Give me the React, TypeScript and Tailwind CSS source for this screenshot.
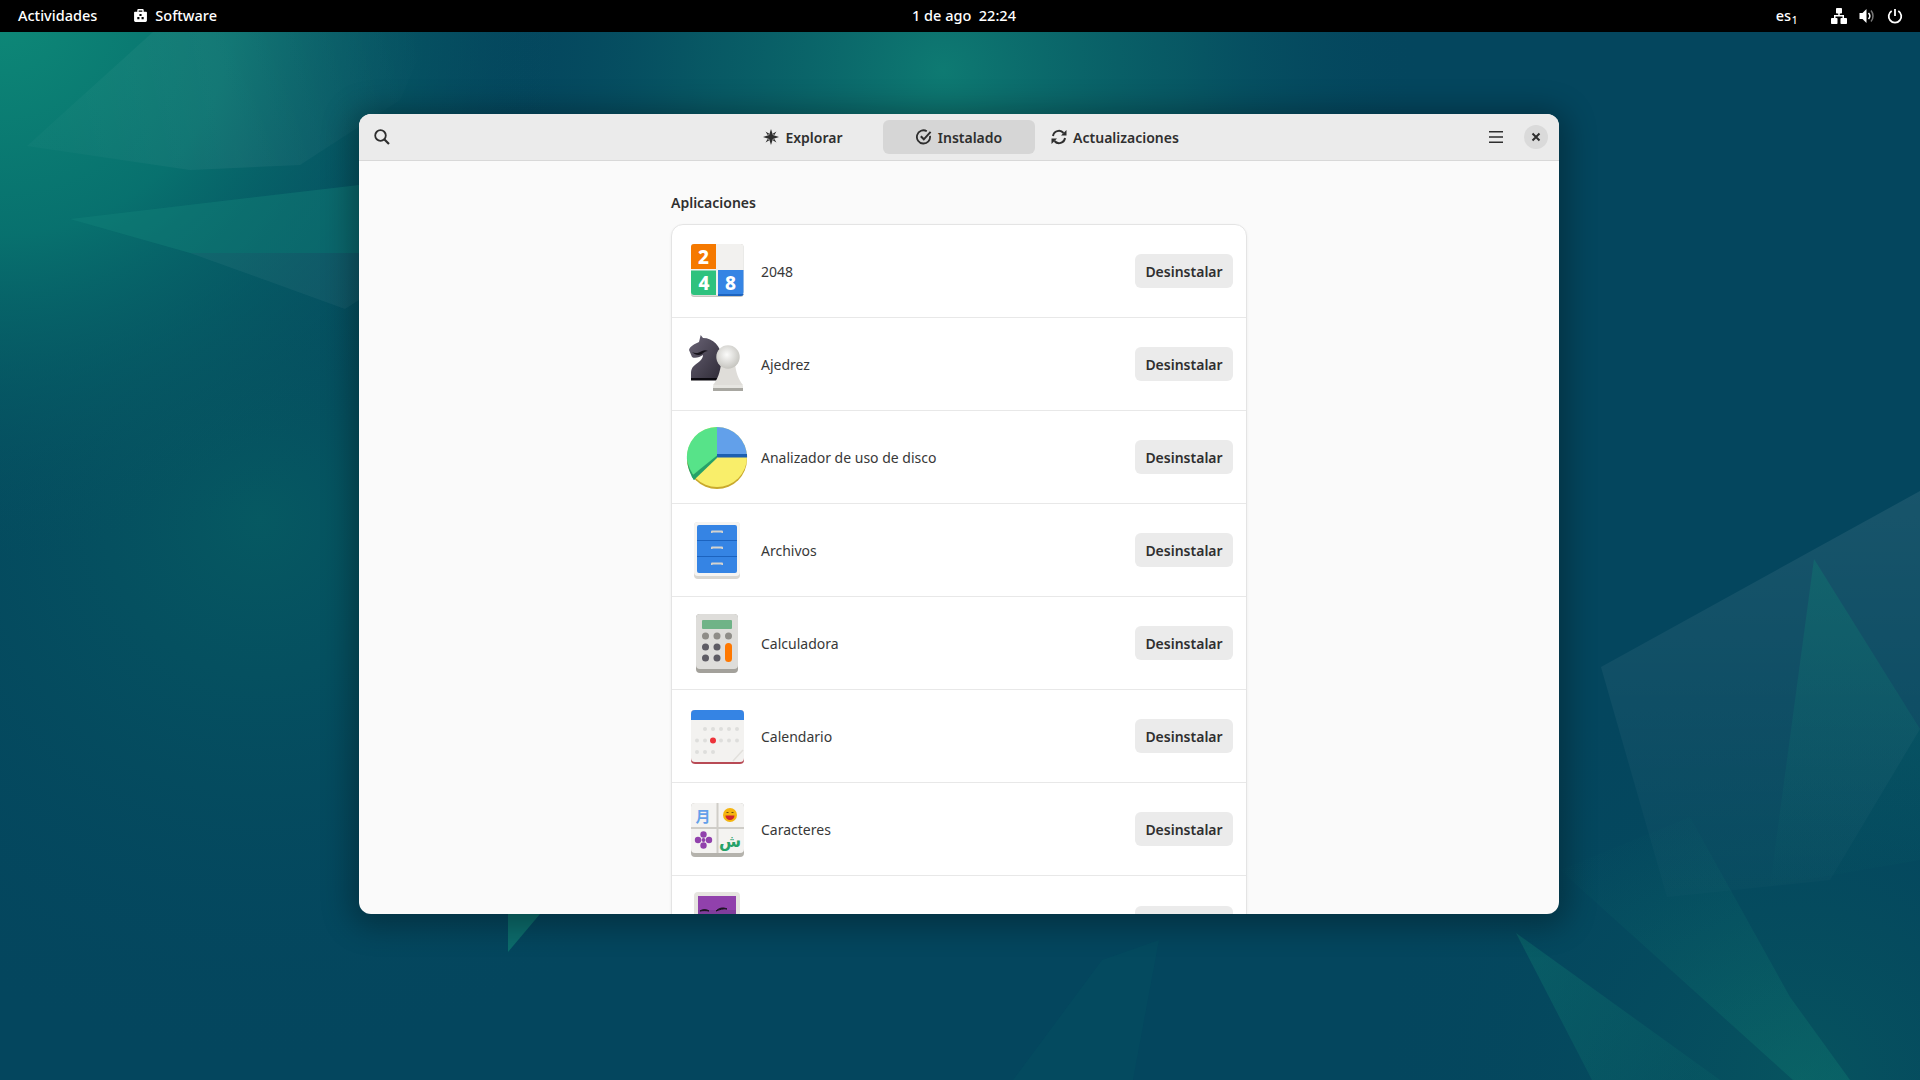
import React from "react";

const FONT = "font-['Noto_Sans','Open_Sans',sans-serif]";

function Wallpaper() {
  return (
    <svg className="absolute inset-0 w-full h-full" viewBox="0 0 1920 1080" preserveAspectRatio="none">
      <defs>
        <radialGradient id="g1" gradientUnits="userSpaceOnUse" cx="0" cy="0" r="560">
          <stop offset="0" stopColor="#0e8a78" />
          <stop offset="0.42" stopColor="#08736f" stopOpacity="0.95" />
          <stop offset="1" stopColor="#06505f" stopOpacity="0" />
        </radialGradient>
        <radialGradient id="g0" gradientUnits="userSpaceOnUse" cx="260" cy="520" r="560">
          <stop offset="0" stopColor="#065a62" stopOpacity="0.95" />
          <stop offset="1" stopColor="#04465e" stopOpacity="0" />
        </radialGradient>
        <radialGradient id="g2" gradientUnits="userSpaceOnUse" cx="943" cy="70" r="480">
          <stop offset="0" stopColor="#0e7a72" />
          <stop offset="0.5" stopColor="#0a6468" stopOpacity="0.6" />
          <stop offset="1" stopColor="#04465e" stopOpacity="0" />
        </radialGradient>
        <radialGradient id="g3" gradientUnits="userSpaceOnUse" cx="1800" cy="1080" r="440">
          <stop offset="0" stopColor="#07555f" stopOpacity="0.9" />
          <stop offset="1" stopColor="#04465e" stopOpacity="0" />
        </radialGradient>
        <linearGradient id="w1" gradientUnits="userSpaceOnUse" x1="60" y1="150" x2="430" y2="60">
          <stop offset="0" stopColor="#ffffff" stopOpacity="0.02" />
          <stop offset="0.45" stopColor="#ffffff" stopOpacity="0.05" />
          <stop offset="1" stopColor="#ffffff" stopOpacity="0" />
        </linearGradient>
        <linearGradient id="w2" gradientUnits="userSpaceOnUse" x1="1700" y1="490" x2="1700" y2="900">
          <stop offset="0" stopColor="#ffffff" stopOpacity="0.08" />
          <stop offset="1" stopColor="#ffffff" stopOpacity="0.012" />
        </linearGradient>
        <linearGradient id="t1" gradientUnits="userSpaceOnUse" x1="1814" y1="559" x2="1790" y2="880">
          <stop offset="0" stopColor="#0f7a70" stopOpacity="0.42" />
          <stop offset="1" stopColor="#0f7a70" stopOpacity="0.02" />
        </linearGradient>
        <linearGradient id="t2" gradientUnits="userSpaceOnUse" x1="1700" y1="800" x2="1840" y2="1080">
          <stop offset="0" stopColor="#0f7a70" stopOpacity="0.02" />
          <stop offset="1" stopColor="#0f7a70" stopOpacity="0.4" />
        </linearGradient>
        <linearGradient id="t3" gradientUnits="userSpaceOnUse" x1="1510" y1="940" x2="1700" y2="1060">
          <stop offset="0" stopColor="#0f7a70" stopOpacity="0.42" />
          <stop offset="1" stopColor="#0f7a70" stopOpacity="0.14" />
        </linearGradient>
      </defs>
      <rect width="1920" height="1080" fill="#04465e" />
      <rect width="1920" height="1080" fill="url(#g0)" />
      <rect width="1920" height="1080" fill="url(#g1)" />
      <rect width="1920" height="1080" fill="url(#g2)" />
      <rect width="1920" height="1080" fill="url(#g3)" />
      <polygon points="27,146 153,32 430,32 400,100 300,165 190,170" fill="url(#w1)" />
      <polygon points="70,219 359,185 359,253 190,253" fill="#12847a" fillOpacity="0.42" />
      <polygon points="190,253 359,253 359,300 345,309" fill="#ffffff" fillOpacity="0.045" />
      <polygon points="1601,667 1920,491 1920,729 1830,880 1667,897" fill="url(#w2)" />
      <polygon points="1814,559 1920,729 1920,860 1770,886" fill="url(#t1)" />
      <polygon points="1560,870 1690,817 1790,997 1850,1080 1793,1080" fill="url(#t2)" />
      <polygon points="1516,933 1592,1080 1720,1080" fill="url(#t3)" />
      <polygon points="508,914 540,914 508,952" fill="#0f7a70" fillOpacity="0.72" />
      <polygon points="1013,1080 1102,960 1159,940 1133,1080" fill="#0f7a70" fillOpacity="0.08" />
    </svg>
  );
}

function Bag() {
  return (
    <svg width="15" height="15" viewBox="0 0 14 14">
      <path fillRule="evenodd" fill="#fff" d="M5 1h4a1 1 0 0 1 1 1v1.500h2.200c.5 0 .8.400.8.800v7.400c0 .7-.6 1.300-1.300 1.300H2.300c-.7 0-1.300-.6-1.300-1.300V4.300c0-.4.3-.8.8-.8H4V2a1 1 0 0 1 1-1Zm.3 1.300v1.200h3.400V2.300ZM6 5.500v2h2v-2Zm-2 3v2h2v-2Zm4 0v2h2v-2Z" />
    </svg>
  );
}

function TopBar() {
  return (
    <div className={`relative flex items-center h-8 pb-[1px] bg-black text-white text-[14.5px] font-medium ${FONT}`}>
      <div className="flex items-center flex-1">
        <span className="ml-[18px]">Actividades</span>
        <span className="ml-[36px] flex items-center gap-[7px]">
          <Bag />
          Software
        </span>
      </div>
      <span className="absolute left-[912px]">1 de ago&nbsp;&nbsp;22:24</span>
      <div className="flex items-center">
        <span className="relative mr-[40px]">
          es<span className="absolute left-[16px] top-[8px] text-[10px]">1</span>
        </span>
        <svg width="16" height="16" viewBox="0 0 16 16" className="mr-[12px]" fill="#fff">
          <rect x="5" y="0" width="6" height="5.500" rx="0.800" />
          <rect x="7.250" y="5" width="1.500" height="3" />
          <rect x="3" y="7" width="10" height="1.500" />
          <rect x="3" y="7" width="1.500" height="4" />
          <rect x="11.500" y="7" width="1.500" height="4" />
          <rect x="0" y="10" width="6.500" height="6" rx="0.800" />
          <rect x="9.500" y="10" width="6.500" height="6" rx="0.800" />
        </svg>
        <svg width="16" height="16" viewBox="0 0 16 16" className="mr-[12px]">
          <path fill="#fff" d="M0.500 5h3L7.500 1v14l-4-4h-3Z" />
          <path fill="none" stroke="#fff" strokeWidth="1.500" d="M9.500 5a4.500 4.500 0 0 1 0 6" />
          <path fill="none" stroke="#777" strokeWidth="1.500" d="M12 2.500a8.500 8.500 0 0 1 0 11" />
        </svg>
        <svg width="16" height="16" viewBox="0 0 16 16" fill="none" stroke="#fff" strokeWidth="1.800" className="mr-[17px]">
          <path d="M8 1v7" />
          <path d="M4.700 2.900a6.300 6.300 0 1 0 6.600 0" />
        </svg>
      </div>
    </div>
  );
}

const ic = "#2e2e2e";

function TabButton({ label, icon, active }: { label: string; icon: React.ReactNode; active?: boolean }) {
  return (
    <div className={`w-[152px] h-[34px] rounded-[6px] flex items-center justify-center gap-[6px] text-[14px] font-semibold text-[#2f2f2f] ${active ? "bg-[#d6d6d6]" : ""}`}>
      {icon}
      <span>{label}</span>
    </div>
  );
}

function Header() {
  return (
    <div className="relative h-[47px] shrink-0 flex items-center justify-center gap-1 bg-[#ebebeb] border-b border-[#d8d8d8]">
      <svg width="16" height="16" viewBox="0 0 16 16" fill="none" stroke={ic} strokeWidth="1.800" className="absolute left-[15px] top-[15px]">
        <circle cx="6.500" cy="6.500" r="5.300" />
        <path d="M10.500 10.500 15 15" strokeWidth="2.200" />
      </svg>
      <TabButton
        label="Explorar"
        icon={
          <svg width="16" height="16" viewBox="0 0 16 16" fill={ic}>
            <path d="M8 0 9.900 6.100 16 8 9.900 9.900 8 16 6.100 9.900 0 8 6.100 6.100Z" />
            <path d="m2.500 2.500 3.800 2.300-1.500 1.500Zm11 0-2.300 3.800-1.500-1.500Zm-11 11 2.300-3.800 1.500 1.500Zm11 0-3.800-2.300 1.500-1.500Z" />
          </svg>
        }
      />
      <TabButton
        label="Instalado"
        active
        icon={
          <svg width="16" height="16" viewBox="0 0 16 16" fill="none" stroke={ic} strokeWidth="1.800">
            <path d="M14 6.800A6.600 6.600 0 1 1 10.800 2.200" />
            <path d="m4.800 7.300 3 3 6.800-7.500" strokeWidth="2" />
          </svg>
        }
      />
      <TabButton
        label="Actualizaciones"
        icon={
          <svg width="16" height="16" viewBox="0 0 16 16" fill="none" stroke={ic} strokeWidth="2">
            <path d="M2 7a6 6 0 0 1 10.500-3" />
            <path d="M14 9a6 6 0 0 1-10.500 3" />
            <path d="M15.500 1v5.500H10Z" fill={ic} stroke="none" />
            <path d="M.5 15V9.500H6Z" fill={ic} stroke="none" />
          </svg>
        }
      />
      <svg width="14" height="12" viewBox="0 0 14 12" fill={ic} className="absolute left-[1130px] top-[17px]">
        <path d="M0 0h14v1.500H0ZM0 5.200h14v1.500H0ZM0 10.500h14V12H0Z" />
      </svg>
      <div className="absolute left-[1165px] top-[11px] w-6 h-6 rounded-full bg-[#dadada] flex items-center justify-center">
        <svg width="10" height="10" viewBox="0 0 10 10" stroke={ic} strokeWidth="2" fill="none">
          <path d="m1.500 1.500 7 7m0-7-7 7" />
        </svg>
      </div>
    </div>
  );
}

const Icon2048 = (
  <svg width="64" height="64" viewBox="0 0 64 64">
    <rect x="6" y="5" width="52.500" height="53" rx="3" fill="#c8c6c1" />
    <rect x="6" y="5" width="52.500" height="51.500" rx="3" fill="#f2f1ef" />
    <path d="M6 8a3 3 0 0 1 3-3h22v25H6Z" fill="#f57900" />
    <path d="M6 31.500h25v24.500H9a3 3 0 0 1-3-3Z" fill="#2ec27e" />
    <path d="M33 31h25.500v22a3 3 0 0 1-3 3H33Z" fill="#3584e4" />
    <path d="M33 55h25.500v.5a3 3 0 0 1-3 1.500H33Z" fill="#1c63bf" />
    <g fill="#fff" fontSize="19" fontWeight="800" textAnchor="middle" fontFamily="Noto Sans, sans-serif">
      <text x="18.500" y="24.500">2</text>
      <text x="19" y="50.500">4</text>
      <text x="45.500" y="50.500">8</text>
    </g>
  </svg>
);

const IconChess = (
  <svg width="64" height="64" viewBox="0 0 64 64">
    <defs>
      <linearGradient id="kn" x1="0" y1="0" x2="1" y2="1">
        <stop offset="0" stopColor="#6a6476" />
        <stop offset="1" stopColor="#2d2935" />
      </linearGradient>
      <radialGradient id="pw" cx="0.45" cy="0.4" r="0.7">
        <stop offset="0" stopColor="#fbfbfa" />
        <stop offset="1" stopColor="#bdbcb6" />
      </radialGradient>
    </defs>
    <path d="M6 48v-7c0-6 4-8 9-12 2-2 3-4 3-6-3 2-8 4-11 2L4 18c1-4 6-6 10-8l1.700-7L18 6c10 0 18 8 19 20l1 22Z" fill="url(#kn)" />
    <path d="M7 20c3 2 7 1 10-1 2-1 4-1 6 0-2 0-4 1-6 3-3 2-7 1-10-2Z" fill="#17141c" />
    <rect x="6" y="46" width="32" height="2.500" fill="#0c0a10" />
    <path d="M36 32h14c1 8 3 15 8 21H28c5-6 7-13 8-21Z" fill="#dfddd9" />
    <circle cx="43" cy="25" r="11.700" fill="url(#pw)" />
    <rect x="28" y="53" width="30" height="4" rx="1" fill="#e6e5e1" />
    <rect x="28" y="56" width="30" height="3" fill="#a8a7a1" />
  </svg>
);

const IconDisk = (
  <svg width="64" height="64" viewBox="0 -1 64 64">
    <circle cx="32" cy="33" r="30" fill="#c9a92c" />
    <circle cx="32" cy="31" r="30" fill="#f9ee6a" />
    <path d="M32 1a30 30 0 0 1 30 30H32Z" fill="#62a0ea" />
    <path d="M32 28h30l.1 3.500H32Z" fill="#1c5fb0" />
    <path d="M2 34c1 6 3 11 6 15L32 31V1A30 30 0 0 0 2 34Z" fill="#57e389" />
    <path d="M32 29.500v2.500L9 54l-2.500-4Z" fill="#26a269" />
    <path d="M2 31c0 9 3 17 7 23l1.500-2C6 46 3 40 2 33Z" fill="#26a269" />
  </svg>
);

const IconFiles = (
  <svg width="64" height="64" viewBox="0 -3 64 64">
    <rect x="9" y="1" width="46" height="57" rx="4" fill="#d9d7d2" />
    <rect x="9" y="1" width="46" height="54" rx="4" fill="#f5f4f2" />
    <rect x="12" y="4" width="40" height="48" rx="2" fill="#3584e4" />
    <path d="M12 19.500h40M12 35.500h40" stroke="#1c63bf" strokeWidth="1" />
    <g fill="#d5d3ce">
      <path d="M26 12v-1.500a1 1 0 0 1 1-1h10a1 1 0 0 1 1 1V12h-1.500v-.5h-9v.5Z" />
      <path d="M26 28v-1.500a1 1 0 0 1 1-1h10a1 1 0 0 1 1 1V28h-1.500v-.5h-9v.5Z" />
      <path d="M26 44v-1.500a1 1 0 0 1 1-1h10a1 1 0 0 1 1 1V44h-1.500v-.5h-9v.5Z" />
    </g>
  </svg>
);

const IconCalc = (
  <svg width="64" height="64" viewBox="0 -1 64 64">
    <rect x="11" y="2" width="42" height="59" rx="4" fill="#a3a19b" />
    <rect x="11" y="2" width="42" height="55" rx="4" fill="#deddda" />
    <rect x="17" y="8" width="30" height="9" rx="1" fill="#6fb387" />
    <g fill="#8f8d88">
      <circle cx="20.500" cy="24" r="3.500" />
      <circle cx="32" cy="24" r="3.500" />
      <circle cx="43.500" cy="24" r="3.500" />
    </g>
    <g fill="#5e5c64">
      <circle cx="20.500" cy="35" r="3.500" />
      <circle cx="32" cy="35" r="3.500" />
      <circle cx="20.500" cy="46" r="3.500" />
      <circle cx="32" cy="46" r="3.500" />
    </g>
    <rect x="40" y="31" width="7" height="19" rx="3.500" fill="#ff7800" />
  </svg>
);

const IconCal = (
  <svg width="64" height="64" viewBox="0 -2 64 64">
    <rect x="6" y="4" width="53" height="54" rx="4" fill="#b84a55" />
    <rect x="6" y="4" width="53" height="52" rx="4" fill="#f3f2f0" />
    <path d="M6 14V8a4 4 0 0 1 4-4h45a4 4 0 0 1 4 4v6Z" fill="#3584e4" />
    <path d="M48 55 58 44" stroke="#e2e0dc" strokeWidth="1.500" />
    <g fill="#dededc">
      {[20, 28, 36, 44, 52].map((x) => <circle key={x} cx={x} cy="23" r="2" />)}
      {[12, 20, 36, 44, 52].map((x) => <circle key={x} cx={x} cy="34.500" r="2" />)}
      {[12, 20, 28].map((x) => <circle key={x} cx={x} cy="46" r="2" />)}
    </g>
    <circle cx="28" cy="34.500" r="3" fill="#ed333b" />
  </svg>
);

const IconChars = (
  <svg width="64" height="64" viewBox="0 0 64 64">
    <rect x="6" y="6" width="53" height="54" rx="4" fill="#b4b2ac" />
    <rect x="6" y="6" width="53" height="50" rx="4" fill="#f4f3f1" />
    <path d="M32.500 6v50M6 31h53" stroke="#cfcdc8" strokeWidth="2" />
    <text x="18" y="25" fontSize="15" fontWeight="700" fill="#62a0ea" textAnchor="middle" fontFamily="Noto Sans CJK SC, sans-serif">月</text>
    <circle cx="45" cy="18" r="7" fill="#f5b50f" />
    <path d="M40.500 18.500h9a4.500 4.500 0 0 1-9 0Z" fill="#d0242e" />
    <path d="M41.500 15.500h2m3 0h2" stroke="#6b4a10" strokeWidth="1" />
    <g fill="#9141ac">
      <circle cx="18.500" cy="37.500" r="3.200" />
      <circle cx="18.500" cy="48.500" r="3.200" />
      <circle cx="13" cy="43" r="3.200" />
      <circle cx="24" cy="43" r="3.200" />
      <circle cx="18.500" cy="43" r="2" />
    </g>
    <text x="45" y="50" fontSize="16" fontWeight="700" fill="#26a269" textAnchor="middle" fontFamily="DejaVu Sans, sans-serif">ش</text>
  </svg>
);

const IconCheese = (
  <svg width="64" height="64" viewBox="0 0 64 64">
    <rect x="9" y="1" width="46" height="60" rx="4" fill="#e6e4e0" />
    <rect x="13" y="5" width="38" height="50" fill="#813d9c" />
    <rect x="13" y="5" width="38" height="14" fill="#9141ac" />
    <path d="M15 20c3-2 6-2 9 0-3-.5-6-.5-9 0Zm16 0c3-3 7-4 11-2-4-.5-7 .5-11 2Z" fill="#1a1420" stroke="#1a1420" strokeWidth="1" />
  </svg>
);

const apps: [string, React.ReactNode][] = [
  ["2048", Icon2048],
  ["Ajedrez", IconChess],
  ["Analizador de uso de disco", IconDisk],
  ["Archivos", IconFiles],
  ["Calculadora", IconCalc],
  ["Calendario", IconCal],
  ["Caracteres", IconChars],
  ["", IconCheese],
];

function Row({ name, icon, last }: { name: string; icon: React.ReactNode; last?: boolean }) {
  return (
    <div className={`h-[93px] shrink-0 flex items-center pl-[13px] pr-[13px] ${last ? "" : "border-b border-[#e8e8e8]"}`}>
      <div className="w-16 h-16 shrink-0">{icon}</div>
      <span className="ml-3 flex-1 text-[14px] text-[#383838]">{name}</span>
      <div className="w-[98px] h-[34px] rounded-[6px] bg-[#ebebeb] flex items-center justify-center text-[14px] font-semibold text-[#2f2f2f]">
        {last ? "" : "Desinstalar"}
      </div>
    </div>
  );
}

function AppWindow() {
  return (
    <div className={`absolute left-[359px] top-[114px] w-[1200px] h-[800px] rounded-[12px] overflow-hidden bg-[#fafafa] flex flex-col shadow-[0_4px_30px_8px_rgba(0,0,0,0.3)] ${FONT}`}>
      <Header />
      <div className="flex-1 overflow-hidden">
        <div className="w-[576px] ml-[312px] pt-[32px]">
          <div className="h-[20px] leading-[20px] text-[14px] font-semibold text-[#2f2f2f]">Aplicaciones</div>
          <div className="mt-[11px] bg-white border border-[#e4e4e4] rounded-[12px] shadow-[0_1px_3px_rgba(0,0,0,0.06)]">
            {apps.map(([n, i], k) => (
              <Row key={k} name={n} icon={i} last={k === apps.length - 1} />
            ))}
          </div>
        </div>
      </div>
    </div>
  );
}

export default function App() {
  return (
    <div className="relative w-[1920px] h-[1080px] overflow-hidden">
      <Wallpaper />
      <div className="relative">
        <TopBar />
      </div>
      <AppWindow />
    </div>
  );
}
